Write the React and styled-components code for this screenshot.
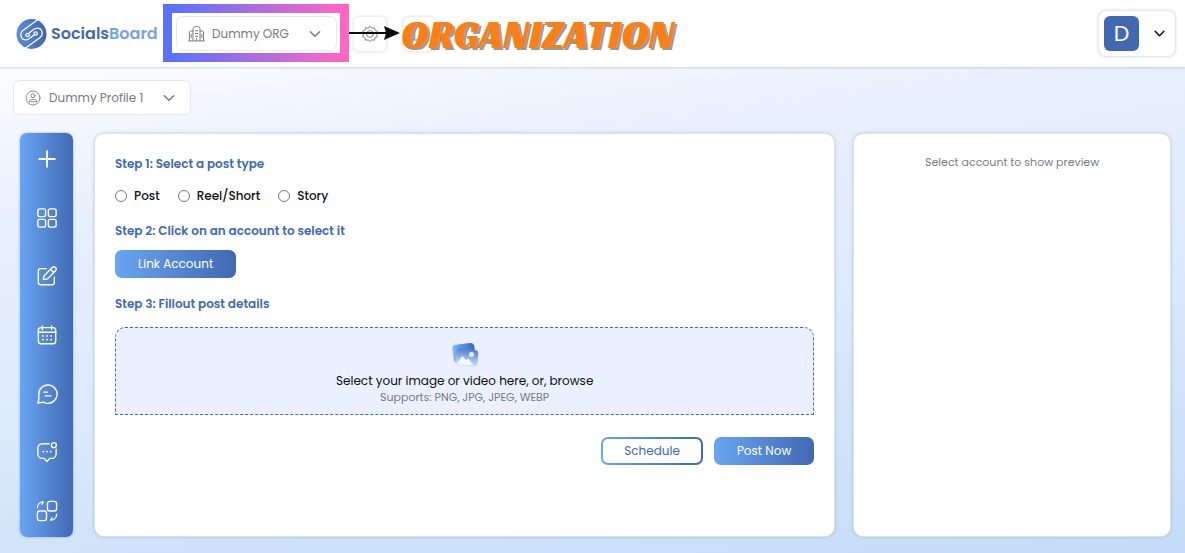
import React, { useState } from 'react'
import styled, { createGlobalStyle } from 'styled-components'

const GlobalStyle = createGlobalStyle`
  :root {
    --blue: #4169b2;
    --lightblue: #68a5f3;
    --grey: #7b7b80;
    --line: #e6e8ee;
    --gradient: linear-gradient(90deg, var(--lightblue) 0%, var(--blue) 100%);
  }
  * {
    box-sizing: border-box;
  }
  body {
    margin: 0;
    font-family: Poppins, Inter, sans-serif;
    font-size: 12px;
    line-height: 20px;
    color: #101014;
  }
  button,
  input,
  select {
    font: inherit;
  }
`

const StyledPage = styled.div`
  display: flex;
  flex-direction: column;
  min-height: 100vh;
  background: linear-gradient(172deg, #f9fbff 12%, #e8effd 32%, #dceafb 60%, #c3dbf8 100%);
`

const StyledHeader = styled.header`
  position: relative;
  display: flex;
  align-items: center;
  height: 67px;
  padding: 0 9px 0 16px;
  background-color: #fff;
  box-shadow: 0 1px 2px rgba(80, 100, 130, 0.25);
`

const StyledLogo = styled.a`
  display: flex;
  align-items: center;
  gap: 4px;
  width: 160px;
  font-size: 16px;
  font-weight: 600;
  color: var(--blue);
  text-decoration: none;
  span span {
    color: #78a3df;
  }
`

const StyledPicker = styled.div`
  position: relative;
  display: flex;
  align-items: center;
  width: ${({ $width }) => $width}px;
  color: var(--grey);
  > svg {
    position: absolute;
    left: 12px;
    pointer-events: none;
  }
  > svg:last-child {
    left: auto;
    right: 14px;
  }
  select {
    appearance: none;
    width: 100%;
    height: 35px;
    padding: 0 32px 0 35px;
    color: inherit;
    background-color: #fff;
    border: 1px solid var(--line);
    border-radius: 7px;
  }
`

const StyledTools = styled.div`
  display: flex;
  gap: 16px;
  margin-left: 16px;
`

const StyledTool = styled.button`
  display: grid;
  place-items: center;
  width: 34px;
  height: 36px;
  padding: 0;
  color: var(--grey);
  background-color: #fff;
  border: 1px solid #eceef4;
  border-radius: 6px;
  box-shadow: 0 0 3px rgba(90, 100, 150, 0.18);
`

const StyledUser = styled.button`
  display: flex;
  align-items: center;
  gap: 13px;
  height: 47px;
  margin-left: auto;
  padding: 0 8px 0 5px;
  color: #101014;
  background-color: #fff;
  border: 1px solid #e4e6ee;
  border-radius: 8px;
  box-shadow: 0 0 3px rgba(90, 100, 150, 0.2);
`

const StyledAvatar = styled.span`
  display: grid;
  place-items: center;
  width: 35px;
  height: 35px;
  font-size: 22px;
  color: #fff;
  background-color: var(--blue);
  border-radius: 6px;
`

// callout drawn over the header
const StyledCallout = styled.div`
  position: absolute;
  top: 4px;
  left: 163px;
  display: flex;
  align-items: center;
  height: 58px;
  pointer-events: none;
`

const StyledCalloutFrame = styled.div`
  width: 186px;
  height: 58px;
  border: 9px solid;
  border-image: linear-gradient(90deg, #5872ff 5%, #ff66c4 95%) 9;
`

const StyledCalloutText = styled.strong`
  padding-top: 2px;
  font-family: 'Racing Sans One', Lato, sans-serif;
  font-size: 40px;
  font-weight: 400;
  line-height: 40px;
  color: #fa7f14;
  text-shadow: 2px 2px 0 #999;
`

const StyledSubHeader = styled.div`
  padding: 13px 13px 18px;
`

const StyledShell = styled.div`
  display: flex;
  flex: 1;
  gap: 21px;
  padding: 0 14px 16px 20px;
`

const StyledSidebar = styled.nav`
  display: flex;
  flex: none;
  flex-direction: column;
  align-items: center;
  justify-content: space-between;
  width: 53px;
  padding: 15px 0;
  background: var(--gradient);
  border-radius: 7px;
  box-shadow: 0 0 3px rgba(60, 80, 130, 0.4);
  a {
    display: flex;
    color: #fff;
  }
`

const StyledPanels = styled.main`
  display: grid;
  flex: 1;
  grid-template-columns: 7fr 3fr;
  gap: 18px;
`

const StyledCard = styled.section`
  padding: 20px;
  background-color: #fff;
  border: 1px solid #dde2ec;
  border-radius: 10px;
  box-shadow: 0 0 3px rgba(70, 90, 140, 0.3);
`

const StyledStep = styled.h2`
  margin: 0;
  font-size: 12px;
  font-weight: 600;
  line-height: 20px;
  color: var(--blue);
`

const StyledTypes = styled.div`
  display: flex;
  gap: 18px;
  margin: 12px 0 15px;
  label {
    display: flex;
    align-items: center;
    gap: 7px;
    font-weight: 500;
  }
  input {
    width: 12px;
    height: 12px;
    margin: 0;
  }
`

const StyledButton = styled.button`
  height: 28px;
  padding: 0 21px;
  color: ${({ $outline }) => ($outline ? 'var(--blue)' : '#fff')};
  background: ${({ $outline }) =>
    $outline
      ? 'linear-gradient(#fff, #fff) padding-box, var(--gradient) border-box'
      : 'var(--gradient) border-box'};
  border: 2px solid transparent;
  border-radius: 7px;
`

const StyledAccounts = styled.div`
  display: flex;
  margin: 9px 0 16px;
`

const StyledDropzone = styled.label`
  display: flex;
  flex-direction: column;
  align-items: center;
  height: 88px;
  margin-top: 13px;
  padding-top: 14px;
  background-color: #eaf0fd;
  border: 1px dashed var(--blue);
  border-radius: 10px 10px 0 0;
  input {
    position: absolute;
    width: 1px;
    height: 1px;
    opacity: 0;
  }
  svg {
    margin-bottom: 3px;
  }
  small {
    font-size: 11px;
    line-height: 12px;
    color: var(--grey);
  }
`

const StyledActions = styled.div`
  display: flex;
  justify-content: flex-end;
  gap: 11px;
  margin-top: 22px;
`

const StyledHint = styled.p`
  margin: 0;
  font-size: 11px;
  line-height: 16px;
  text-align: center;
  color: var(--grey);
`

const Icon = ({ size = 22, stroke = 1.5, children }) => (
  <svg
    width={size}
    height={size}
    viewBox="0 0 24 24"
    fill="none"
    stroke="currentColor"
    strokeWidth={stroke}
    strokeLinecap="round"
    strokeLinejoin="round"
    aria-hidden="true"
  >
    {children}
  </svg>
)

const Chevron = ({ size = 16, stroke = 2.2 }) => (
  <Icon size={size} stroke={stroke}>
    <path d="M5 8.500l7 7 7-7" />
  </Icon>
)

const LogoMark = () => (
  <svg width="31" height="32" viewBox="0 0 32 32" fill="none" aria-hidden="true">
    <defs>
      <linearGradient id="mark" x1="0" y1="0" x2="1" y2="0">
        <stop offset="0" stopColor="#5b8fd6" />
        <stop offset="1" stopColor="#3f66ae" />
      </linearGradient>
    </defs>
    <circle cx="16" cy="16" r="15.5" fill="url(#mark)" />
    <g stroke="#fff" strokeWidth="1.3" strokeLinecap="round">
      <path d="M22 1.500L7.500 12C3 16 5 22 10 22c3 0 4.500-1.500 6-3" />
      <path d="M10 30.500L24.500 20C29 16 27 10 22 10c-3 0-4.500 1.500-6 3L12.800 15.500" />
      <circle cx="12" cy="17" r="1.700" />
      <path d="M16 19l3.200-2.500" />
      <circle cx="20.300" cy="15.500" r="1.700" />
    </g>
  </svg>
)

const PictureIcon = () => (
  <svg width="28" height="26" viewBox="0 0 28 26" aria-hidden="true">
    <defs>
      <linearGradient id="photo" x1="0" y1="0" x2="1" y2="0">
        <stop offset="0" stopColor="#86b6f3" />
        <stop offset="0.4" stopColor="#5a94e4" />
        <stop offset="1" stopColor="#3c66b3" />
      </linearGradient>
      <linearGradient id="fade" x1="0" y1="0" x2="0" y2="1">
        <stop offset="0" stopColor="#4b80d2" />
        <stop offset="1" stopColor="#d3e3fa" />
      </linearGradient>
    </defs>
    <rect x="2" y="2" width="22" height="18" rx="4" fill="url(#photo)" transform="rotate(-7 12 11)" />
    <rect x="5" y="7" width="22" height="17" rx="4" fill="url(#fade)" transform="rotate(7 16 15)" />
    <path d="M6 21l5.500-7 3.500 4 2.500-1.500 5 7L9 22.500q-3-.3-3-1.500z" fill="#f4f8ff" />
    <circle cx="20.500" cy="12.500" r="2.500" fill="#dceafd" />
  </svg>
)

const navItems = [
  { label: 'Create', icon: <path d="M12 3.500v17M3.500 12h17" strokeWidth="2" /> },
  {
    label: 'Dashboard',
    icon: (
      <>
        <rect x="2" y="2" width="8.500" height="8.500" rx="2" />
        <rect x="13.500" y="2" width="8.500" height="8.500" rx="2" />
        <rect x="2" y="13.500" width="8.500" height="8.500" rx="2" />
        <rect x="13.500" y="13.500" width="8.500" height="8.500" rx="2" />
      </>
    ),
  },
  {
    label: 'Compose',
    icon: (
      <>
        <path d="M11 4H5a2.500 2.500 0 0 0-2.500 2.500V19A2.500 2.500 0 0 0 5 21.500h12.500A2.500 2.500 0 0 0 20 19v-6" />
        <path d="M8 16l.8-4.300 9-9a2.400 2.400 0 0 1 3.500 3.500l-9 9zM15.800 4.700l3.500 3.500" />
      </>
    ),
  },
  {
    label: 'Calendar',
    icon: (
      <>
        <rect x="2.500" y="4" width="19" height="17.500" rx="3" />
        <path d="M7 2v4M17 2v4M2.500 9h19" />
        <path d="M7.500 13h.1M12 13h.1M16.500 13h.1M7.500 17h.1M12 17h.1M16.500 17h.1" strokeWidth="2" />
      </>
    ),
  },
  {
    label: 'Messages',
    icon: (
      <>
        <path d="M2 22l1-3.500V12a10 10 0 1 1 5 8.800z" />
        <path d="M8.500 10h4M10 14h6.500" />
      </>
    ),
  },
  {
    label: 'Comments',
    icon: (
      <>
        <path d="M14.500 3H7a5 5 0 0 0-5 5v6a5 5 0 0 0 5 5h2l3 3.500 3-3.500h2a5 5 0 0 0 5-5V9" />
        <circle cx="19.500" cy="4.500" r="2.700" />
        <path d="M8 11.500h.1M12 11.500h.1M16 11.500h.1" strokeWidth="2" />
      </>
    ),
  },
  {
    label: 'Switch',
    icon: (
      <>
        <rect x="12.500" y="1.500" width="10" height="10.500" rx="2.500" />
        <rect x="1.500" y="12" width="10" height="10.500" rx="2.500" />
        <path d="M1.500 8.500C1.500 5 4 2 8 2L6.500 4.500M22.500 15.500c0 3.500-2.500 6.500-6.500 6.500l1.500-2.500" />
      </>
    ),
  },
]

const postTypes = ['Post', 'Reel/Short', 'Story']

// markup
const App = () => {
  const [type, setType] = useState('')

  return (
    <StyledPage>
      <GlobalStyle />
      <StyledHeader>
        <StyledLogo href="#">
          <LogoMark />
          <span>
            Socials<span>Board</span>
          </span>
        </StyledLogo>
        <StyledPicker $width={161}>
          <Icon size={17} stroke={1.4}>
            <path d="M7 22V4.500L10 2h4l3 2.500V22M1 22.500h22M7 8.500H3.500L2 10v12M17 8.500h3.500L22 10v12M10.500 8h3M10.500 12h3M10.500 16h3M4.500 13v5M19.500 13v5M12 19v3" />
          </Icon>
          <select aria-label="Organization">
            <option>Dummy ORG</option>
          </select>
          <Chevron />
        </StyledPicker>
        <StyledTools>
          <StyledTool aria-label="Settings">
            <Icon size={18} stroke={1.3}>
              <path d="M12 2l2.500 2.200 3.300-.5 1 3.200 3 1.500-1 3.600 1 3.600-3 1.500-1 3.200-3.300-.5L12 22l-2.500-2.200-3.300.5-1-3.200-3-1.500 1-3.600-1-3.600 3-1.500 1-3.200 3.300.5z" />
              <circle cx="12" cy="12" r="4.500" />
            </Icon>
          </StyledTool>
          <StyledTool aria-label="Notifications">
            <Icon size={18} stroke={1.3}>
              <path d="M5 18V9a7 7 0 0 1 14 0v9l2 2H3zM10 22h4" />
            </Icon>
          </StyledTool>
        </StyledTools>
        <StyledUser aria-label="Account menu">
          <StyledAvatar>D</StyledAvatar>
          <Chevron size={15} stroke={2.5} />
        </StyledUser>
        <StyledCallout>
          <StyledCalloutFrame />
          <svg width="52" height="14" viewBox="0 0 52 14" aria-hidden="true">
            <path d="M0 7h38" stroke="#0b0b0b" strokeWidth="2" />
            <path d="M35 0l16 7-16 7 2-7z" fill="#0b0b0b" />
          </svg>
          <StyledCalloutText>ORGANIZATION</StyledCalloutText>
        </StyledCallout>
      </StyledHeader>

      <StyledSubHeader>
        <StyledPicker $width={178}>
          <Icon size={16} stroke={1.3}>
            <circle cx="12" cy="12" r="10.500" />
            <circle cx="12" cy="8.500" r="3" />
            <path d="M6 17c0-4 12-4 12 0z" />
          </Icon>
          <select aria-label="Profile">
            <option>Dummy Profile 1</option>
          </select>
          <Chevron />
        </StyledPicker>
      </StyledSubHeader>

      <StyledShell>
        <StyledSidebar>
          {navItems.map(({ label, icon }) => (
            <a key={label} href="#" aria-label={label}>
              <Icon>{icon}</Icon>
            </a>
          ))}
        </StyledSidebar>
        <StyledPanels>
          <StyledCard>
            <StyledStep>Step 1: Select a post type</StyledStep>
            <StyledTypes>
              {postTypes.map((name) => (
                <label key={name}>
                  <input
                    type="radio"
                    name="type"
                    checked={type === name}
                    onChange={() => setType(name)}
                  />
                  {name}
                </label>
              ))}
            </StyledTypes>
            <StyledStep>Step 2: Click on an account to select it</StyledStep>
            <StyledAccounts>
              <StyledButton>Link Account</StyledButton>
            </StyledAccounts>
            <StyledStep>Step 3: Fillout post details</StyledStep>
            <StyledDropzone>
              <input type="file" />
              <PictureIcon />
              Select your image or video here, or, browse
              <small>Supports: PNG, JPG, JPEG, WEBP</small>
            </StyledDropzone>
            <StyledActions>
              <StyledButton $outline>Schedule</StyledButton>
              <StyledButton>Post Now</StyledButton>
            </StyledActions>
          </StyledCard>
          <StyledCard>
            <StyledHint>Select account to show preview</StyledHint>
          </StyledCard>
        </StyledPanels>
      </StyledShell>
    </StyledPage>
  )
}

export default App
